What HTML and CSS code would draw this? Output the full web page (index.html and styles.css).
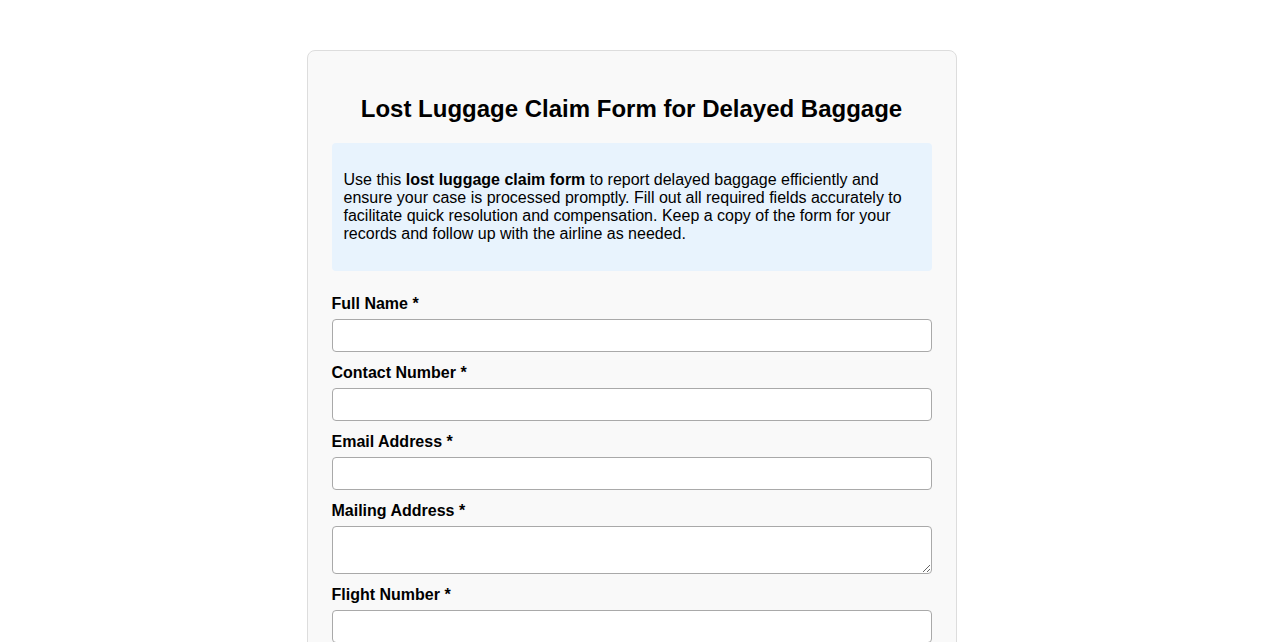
FILE: index.html
```html
<!DOCTYPE html>
<html lang="en">
<head>
<meta charset="utf-8">
<title>Lost Luggage Claim Form for Delayed Baggage</title>
<link rel="stylesheet" href="styles.css">
</head>
<body>
<div class="card">
  <h2 class="title">Lost Luggage Claim Form for Delayed Baggage</h2>
  <div class="info">
    <p>Use this <strong>lost luggage claim form</strong> to report delayed baggage efficiently and ensure your case is processed promptly. Fill out all required fields accurately to facilitate quick resolution and compensation. Keep a copy of the form for your records and follow up with the airline as needed.</p>
  </div>
  <form class="form">
    <div class="group">
      <label class="label" for="name">Full Name *</label>
      <input class="field" type="text" id="name">
    </div>
    <div class="group">
      <label class="label" for="phone">Contact Number *</label>
      <input class="field" type="tel" id="phone">
    </div>
    <div class="group">
      <label class="label" for="email">Email Address *</label>
      <input class="field" type="email" id="email">
    </div>
    <div class="group">
      <label class="label" for="address">Mailing Address *</label>
      <textarea class="field area" id="address"></textarea>
    </div>
    <div class="group">
      <label class="label" for="flight">Flight Number *</label>
      <input class="field" type="text" id="flight">
    </div>
    <div class="group">
      <label class="label" for="date">Date of Flight *</label>
      <input class="field" type="text" id="date">
    </div>
    <div class="group">
      <label class="label" for="tag">Baggage Tag Number *</label>
      <input class="field" type="text" id="tag">
    </div>
    <div class="group">
      <label class="label" for="desc">Description of Baggage *</label>
      <textarea class="field area" id="desc"></textarea>
    </div>
    <button class="submit" type="button">Submit Claim</button>
  </form>
</div>
</body>
</html>
```
FILE: styles.css
```css
html, body {
  margin: 0;
  padding: 0;
  background: #ffffff;
}
body {
  font-family: "Liberation Sans", Arial, sans-serif;
  color: #000;
}
.card {
  width: 600px;
  margin: 50px auto;
  padding: 24px;
  background: #f9f9f9;
  border: 1px solid #dddddd;
  border-radius: 8px;
}
.title {
  margin: 20px 0;
  font-size: 24px;
  font-weight: bold;
  text-align: center;
  line-height: 27.6px;
}
.info {
  background: #e8f3fd;
  border-radius: 4px;
  padding: 12px 12px;
  margin-bottom: 23px;
}
.info p {
  margin: 16px 0;
  font-size: 16px;
  line-height: 18px;
}
.form {
  display: flex;
  flex-direction: column;
}
.group {
  display: flex;
  flex-direction: column;
  margin-bottom: 11px;
}
.label {
  font-size: 16px;
  font-weight: bold;
  line-height: 19px;
  margin-bottom: 6px;
}
.field {
  box-sizing: border-box;
  width: 100%;
  height: 33px;
  padding: 8px;
  font-family: "Liberation Sans", Arial, sans-serif;
  font-size: 14px;
  border: 1px solid #a9a9a9;
  border-radius: 4px;
  background: #fff;
}
.area {
  height: 48px;
  resize: vertical;
}
.submit {
  margin-top: 10px;
  padding: 10px 20px;
  font-size: 16px;
  background: #007bff;
  color: #fff;
  border: none;
  border-radius: 4px;
}
```
